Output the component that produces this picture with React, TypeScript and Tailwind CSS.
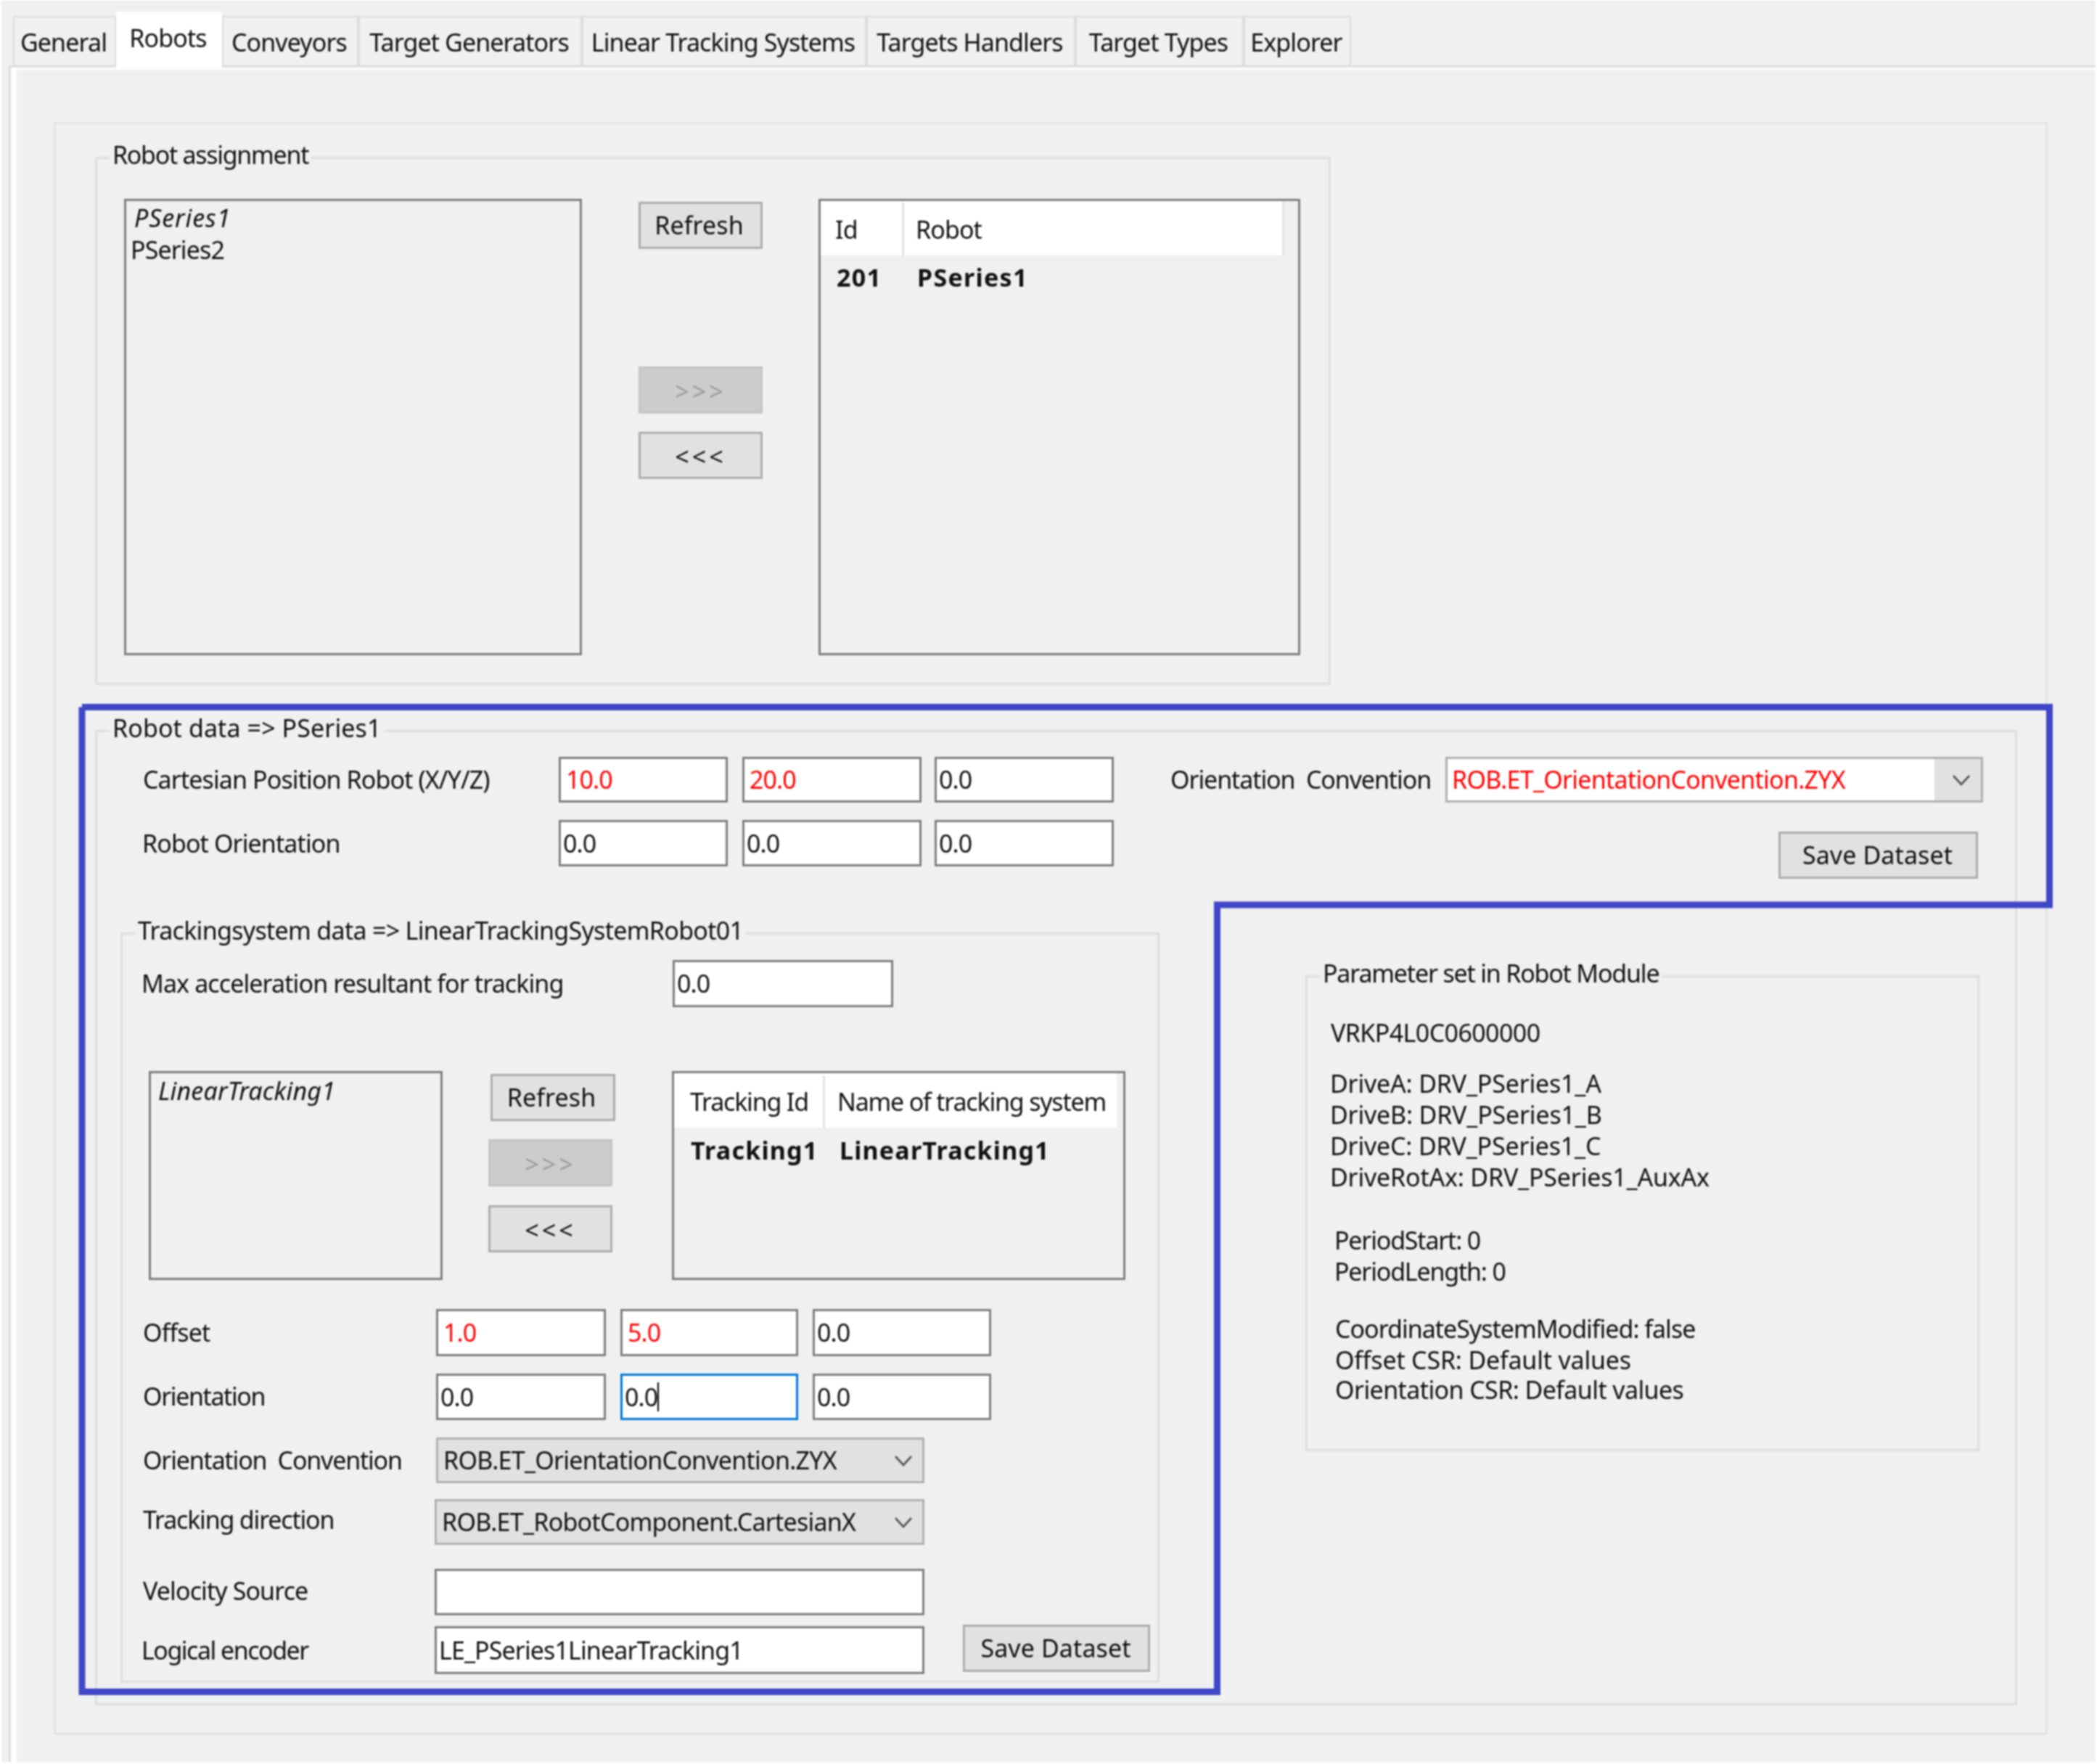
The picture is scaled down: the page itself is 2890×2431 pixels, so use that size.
import React from "react";

const Btn = ({ className, children, off }: { className: string; children: React.ReactNode; off?: boolean }) => (
  <div className={`flex items-center justify-center border-[3px] tracking-[0.1px] ${off ? "border-[#c4c4c4] bg-[#cccccc] text-[#9c9c9c]" : "border-[#adadad] bg-[#e1e1e1]"} ${className}`}>{children}</div>
);

const Field = ({ className, children, red, focus }: { className: string; children?: React.ReactNode; red?: boolean; focus?: boolean }) => (
  <div className={`flex items-center overflow-hidden whitespace-nowrap border-[3px] bg-white pl-[3px] ${focus ? "border-[#0078d7]" : "border-[#7f7f7f]"} ${red ? "text-[#ff0000]" : ""} ${className}`}>{children}</div>
);

const Chevron = () => (
  <svg width="28" height="16" viewBox="0 0 28 16" fill="none" stroke="#555555" strokeWidth="2.6"><polyline points="3,2 14,14 25,2" /></svg>
);

const Combo = ({ className, children }: { className: string; children: React.ReactNode }) => (
  <div className={`flex items-center justify-between border-[3px] border-[#b0b0b0] bg-[#e1e1e1] pl-[7px] pr-[12px] ${className}`}>
    <span className="whitespace-nowrap tracking-[-0.75px]">{children}</span>
    <Chevron />
  </div>
);

const Group = ({ className, title, titleClass, children }: { className: string; title: string; titleClass: string; children: React.ReactNode }) => (
  <div className={`relative border-[3px] border-[#dedede] ${className}`}>
    <span className={`absolute whitespace-nowrap bg-[#f0f0f0] px-[4px] leading-[42px] ${titleClass}`}>{title}</span>
    {children}
  </div>
);

const tabs: [string, string][] = [
  ["General", "w-[142px]"],
  ["Conveyors", "w-[188px]"],
  ["Target Generators", "w-[308px]"],
  ["Linear Tracking Systems", "w-[392px]"],
  ["Targets Handlers", "w-[288px]"],
  ["Target Types", "w-[232px]"],
  ["Explorer", "w-[148px]"],
];

const Tab = ({ label, className }: { label: string; className: string }) => (
  <div className={`flex h-[68px] items-center justify-center border-[2px] border-b-0 border-[#dcdcdc] bg-[#f0f0f0] pr-[3px] pt-[3px] ${className}`}>{label}</div>
);

const Label = ({ className, children }: { className: string; children: React.ReactNode }) => (
  <div className={`flex items-center whitespace-nowrap ${className}`}>{children}</div>
);

export default function App() {
  return (
    <div
      className="relative h-[2431px] w-[2890px] overflow-hidden bg-[#f0f0f0] text-[34px] tracking-[-0.9px] text-[#111111] blur-[0.8px]"
      style={{ fontFamily: '"Noto Sans", sans-serif' }}
    >
      <div className="ml-[12px] flex h-[93px] items-end border-b-[3px] border-[#dcdcdc] pl-[6px]">
        <Tab label={tabs[0][0]} className={tabs[0][1]} />
        <div className="relative z-10 mb-[-3px] flex h-[77px] w-[146px] items-center justify-center bg-white pb-[4px] pr-[3px]">Robots</div>
        {tabs.slice(1).map(([l, w]) => (
          <Tab key={l} label={l} className={w} />
        ))}
      </div>
      <div className="ml-[15px] h-[2338px] border-l-[8px] border-t-[3px] border-white pl-[51px] pt-[72px] shadow-[-3px_0_0_#dcdcdc]">
        <div className="h-[2223px] w-[2748px] border-[3px] border-[#e3e3e3] pl-[54px] pt-[45px]">
          <Group className="flex h-[728px] w-[1703px] pl-[37px] pt-[55px]" title="Robot assignment" titleClass="left-[17px] top-[-27px] tracking-[-1.3px]">
            <div className="h-[629px] w-[631px] border-[3px] border-[#7f7f7f] pl-[6px] leading-[44px]">
              <div className="pl-[5px] pt-[1px] italic tracking-[0.9px]">PSeries1</div>
              <div>PSeries2</div>
            </div>
            <div className="ml-[78px] w-[171px] pt-[4px]">
              <Btn className="h-[65px] pr-[4px]">Refresh</Btn>
              <Btn off className="mt-[162px] h-[65px] pt-[3px] tracking-[4px]">&gt;&gt;&gt;</Btn>
              <Btn className="mt-[25px] h-[65px] pt-[3px] tracking-[4px]">&lt;&lt;&lt;</Btn>
            </div>
            <div className="ml-[77px] h-[629px] w-[664px] border-[3px] border-[#7f7f7f]">
              <div className="flex h-[75px] w-[639px] items-center border-r-[3px] border-[#e4e4e4] bg-white pt-[4px]">
                <span className="w-[115px] border-r-[3px] border-[#e4e4e4] pl-[20px] leading-[75px]">Id</span>
                <span className="pl-[16px]">Robot</span>
              </div>
              <div className="flex pt-[8px] font-bold leading-[44px] tracking-[1.3px]">
                <span className="w-[115px] pl-[22px]">201</span>
                <span className="pl-[18px]">PSeries1</span>
              </div>
            </div>
          </Group>

          <Group className="mt-[62px] h-[1344px] w-[2649px] pt-[34px]" title="Robot data => PSeries1" titleClass="left-[17px] top-[-27px] tracking-[0.1px]">
            <div className="flex">
              <Label className="h-[63px] w-[636px] pl-[63px]">Cartesian Position Robot (X/Y/Z)</Label>
              <Field red className="h-[63px] w-[233px] pl-[7px]">10.0</Field>
              <Field red className="ml-[20px] h-[63px] w-[247px] pl-[7px]">20.0</Field>
              <Field className="ml-[18px] h-[63px] w-[247px]">0.0</Field>
              <Label className="ml-[78px] h-[63px] w-[379px] tracking-[-1.1px]">Orientation&nbsp; Convention</Label>
              <div className="flex h-[63px] w-[741px] border-[3px] border-[#b0b0b0]">
                <div className="flex flex-1 items-center bg-white pl-[6px] tracking-[-0.75px] text-[#ff0000]">ROB.ET_OrientationConvention.ZYX</div>
                <div className="flex w-[64px] items-center justify-center bg-[#e1e1e1] pl-[10px]"><Chevron /></div>
              </div>
            </div>
            <div className="mt-[24px] flex">
              <Label className="h-[64px] w-[636px] pl-[62px]">Robot Orientation</Label>
              <Field className="h-[64px] w-[233px]">0.0</Field>
              <Field className="ml-[20px] h-[64px] w-[247px]">0.0</Field>
              <Field className="ml-[18px] h-[64px] w-[247px]">0.0</Field>
              <Btn className="ml-[916px] mt-[16px] h-[65px] w-[275px] pr-[2px]">Save Dataset</Btn>
            </div>

            <div className="flex items-start pl-[32px] pt-[74px]">
              <Group className="h-[1034px] w-[1432px] pt-[35px]" title="Trackingsystem data => LinearTrackingSystemRobot01" titleClass="left-[17px] top-[-27px] tracking-[-0.7px]">
                <div className="flex">
                  <Label className="h-[65px] w-[758px] pl-[26px]">Max acceleration resultant for tracking</Label>
                  <Field className="h-[65px] w-[304px]">0.0</Field>
                </div>
                <div className="mt-[88px] flex pl-[36px]">
                  <div className="h-[288px] w-[405px] border-[3px] border-[#7f7f7f] pl-[10px] pt-[2px] italic leading-[44px] tracking-[0.2px]">LinearTracking1</div>
                  <div className="ml-[60px] w-[177px] pl-[3px]">
                    <Btn className="ml-[3px] mt-[4px] h-[65px] w-[172px] pr-[4px]">Refresh</Btn>
                    <Btn off className="mt-[25px] h-[65px] w-[171px] pt-[3px] tracking-[4px]">&gt;&gt;&gt;</Btn>
                    <Btn className="mt-[26px] h-[65px] w-[171px] pt-[3px] tracking-[4px]">&lt;&lt;&lt;</Btn>
                  </div>
                  <div className="ml-[79px] h-[288px] w-[625px] border-[3px] border-[#7f7f7f]">
                    <div className="flex h-[75px] w-[610px] items-center bg-white pt-[3px] tracking-[-1.2px]">
                      <span className="w-[208px] border-r-[3px] border-[#e4e4e4] pl-[22px] leading-[72px]">Tracking Id</span>
                      <span className="pl-[17px]">Name of tracking system</span>
                    </div>
                    <div className="flex pt-[9px] font-bold leading-[44px] tracking-[1.2px]">
                      <span className="w-[210px] pl-[23px]">Tracking1</span>
                      <span className="pl-[18px]">LinearTracking1</span>
                    </div>
                  </div>
                </div>
                <div className="mt-[40px] flex">
                  <Label className="h-[65px] w-[432px] pl-[28px]">Offset</Label>
                  <Field red className="h-[65px] w-[234px] pl-[7px]">1.0</Field>
                  <Field red className="ml-[20px] h-[65px] w-[245px] pl-[7px]">5.0</Field>
                  <Field className="ml-[20px] h-[65px] w-[246px]">0.0</Field>
                </div>
                <div className="mt-[24px] flex">
                  <Label className="h-[64px] w-[432px] pb-[2px] pl-[28px] tracking-[-1.4px]">Orientation</Label>
                  <Field className="h-[64px] w-[234px]">0.0</Field>
                  <Field focus className="ml-[20px] h-[64px] w-[245px]"><span className="border-r-[2px] border-black leading-[40px]">0.0</span></Field>
                  <Field className="ml-[20px] h-[64px] w-[246px]">0.0</Field>
                </div>
                <div className="mt-[24px] flex">
                  <Label className="h-[63px] w-[432px] pl-[28px] tracking-[-1.2px]">Orientation&nbsp; Convention</Label>
                  <Combo className="h-[63px] w-[673px]">ROB.ET_OrientationConvention.ZYX</Combo>
                </div>
                <div className="mt-[22px] flex">
                  <Label className="h-[63px] w-[430px] pb-[6px] pl-[28px] tracking-[-1.2px]">Tracking direction</Label>
                  <Combo className="h-[63px] w-[675px]">ROB.ET_RobotComponent.CartesianX</Combo>
                </div>
                <div className="mt-[33px] flex">
                  <Label className="h-[64px] w-[430px] pb-[3px] pl-[28px]">Velocity Source</Label>
                  <Field className="h-[64px] w-[675px]" />
                </div>
                <div className="mt-[15px] flex">
                  <Label className="h-[66px] w-[430px] pl-[26px] tracking-[-1.5px]">Logical encoder</Label>
                  <Field className="h-[66px] w-[675px]">LE_PSeries1LinearTracking1</Field>
                  <Btn className="ml-[53px] mt-[-2px] h-[65px] w-[258px] pr-[2px]">Save Dataset</Btn>
                </div>
              </Group>

              <div className="ml-[201px] mt-[59px]">
                <Group className="h-[656px] w-[929px] pl-[32px] pt-[55px] leading-[43px] tracking-[-0.6px]" title="Parameter set in Robot Module" titleClass="left-[17px] top-[-27px] tracking-[-1.2px]">
                  <div>VRKP4L0C0600000</div>
                  <div className="ml-[-1px] mt-[27px] tracking-[-0.2px]">DriveA: DRV_PSeries1_A</div>
                  <div className="ml-[-1px] tracking-[-0.2px]">DriveB: DRV_PSeries1_B</div>
                  <div className="ml-[-1px] tracking-[-0.2px]">DriveC: DRV_PSeries1_C</div>
                  <div className="ml-[-1px] tracking-[-0.2px]">DriveRotAx: DRV_PSeries1_AuxAx</div>
                  <div className="ml-[5px] mt-[44px] tracking-[-1.2px]">PeriodStart: 0</div>
                  <div className="ml-[5px] tracking-[-1.2px]">PeriodLength: 0</div>
                  <div className="ml-[6px] mt-[36px] tracking-[-1px]">CoordinateSystemModified: false</div>
                  <div className="ml-[6px] tracking-[-0.2px]">Offset CSR: Default values</div>
                  <div className="ml-[6px] mt-[-2px]">Orientation CSR: Default values</div>
                </Group>
              </div>
            </div>
          </Group>
        </div>
      </div>

      <svg className="absolute left-0 top-0" width="2890" height="2431" fill="none" stroke="#3f47c8" strokeWidth="9">
        <polyline points="113,974.5 2824.5,974.5 2824.5,1247 1677.5,1247 1677.5,2331.5 113,2331.5 113,974.5" />
      </svg>
      <div className="pointer-events-none absolute inset-0 border-b-[3px] border-l-[2px] border-r-[2px] border-t-[1px] border-white" />
    </div>
  );
}
